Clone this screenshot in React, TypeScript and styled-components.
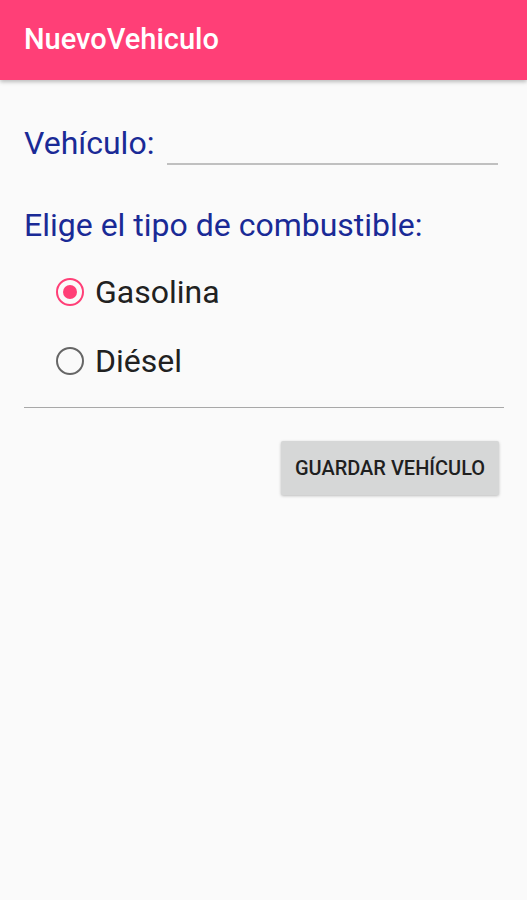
import React from "react";
import styled, { createGlobalStyle } from "styled-components";

const GlobalStyle = createGlobalStyle`
    html, body {
        margin: 0;
        padding: 0;
        background: #fafafa;
        font-family: Roboto, "Noto Sans", sans-serif;
    }
`;

const Screen = styled.div`
    width: 527px;
    height: 900px;
    background: #fafafa;
    display: flex;
    flex-direction: column;
`;

const AppBar = styled.header`
    height: 80px;
    background: #ff3f77;
    box-shadow: 0 2px 4px rgba(0, 0, 0, 0.25);
    display: flex;
    align-items: center;
    padding: 0 24px;
    flex-shrink: 0;
`;

const Title = styled.h1`
    margin: 0;
    color: #ffffff;
    font-size: 29px;
    font-weight: 500;
    padding-bottom: 2px;
`;

const Content = styled.main`
    padding: 45px 23px 0 24px;
    display: flex;
    flex-direction: column;
`;

const FieldRow = styled.div`
    display: flex;
    align-items: flex-end;
    gap: 13px;
`;

const Label = styled.span`
    color: #1a2a96;
    font-size: 32px;
    line-height: 36px;
`;

const TextInput = styled.input`
    flex: 1;
    min-width: 0;
    margin-right: 6px;
    margin-bottom: -4px;
    border: none;
    border-bottom: 2px solid #c0c0c0;
    background: transparent;
    height: 30px;
    outline: none;
    font-size: 26px;
`;

const Question = styled(Label)`
    margin-top: 46px;
`;

const RadioGroup = styled.div`
    display: flex;
    flex-direction: column;
    gap: 33px;
    padding: 31px 0 0 32px;
`;

const RadioRow = styled.label`
    display: flex;
    align-items: center;
    gap: 11px;
    font-size: 32px;
    color: #212121;
    line-height: 36px;
`;

const RadioCircle = styled.span<{ $checked?: boolean }>`
    width: 28px;
    height: 28px;
    box-sizing: border-box;
    border-radius: 50%;
    border: 2.5px solid ${(p) => (p.$checked ? "#ff3f77" : "#666666")};
    display: flex;
    align-items: center;
    justify-content: center;
    &::after {
        content: "";
        width: 14px;
        height: 14px;
        border-radius: 50%;
        background: ${(p) => (p.$checked ? "#ff3f77" : "transparent")};
    }
`;

const Divider = styled.hr`
    margin: 28px 0 0 0;
    border: none;
    border-top: 1.5px solid #a8a8a8;
`;

const ButtonRow = styled.div`
    display: flex;
    justify-content: flex-end;
    padding-top: 33px;
    padding-right: 5px;
`;

const Button = styled.button`
    width: 218px;
    height: 54px;
    padding: 0;
    border: none;
    border-radius: 2px;
    background: #d6d7d7;
    box-shadow: 0 1px 3px rgba(0, 0, 0, 0.25);
    color: #1f1f1f;
    font-family: Roboto, sans-serif;
    font-size: 20px;
    font-weight: 500;
`;

export default function App() {
    return (
        <>
            <GlobalStyle />
            <Screen>
                <AppBar>
                    <Title>NuevoVehiculo</Title>
                </AppBar>
                <Content>
                    <FieldRow>
                        <Label>Vehículo:</Label>
                        <TextInput />
                    </FieldRow>
                    <Question>Elige el tipo de combustible:</Question>
                    <RadioGroup>
                        <RadioRow>
                            <RadioCircle $checked />
                            Gasolina
                        </RadioRow>
                        <RadioRow>
                            <RadioCircle />
                            Diésel
                        </RadioRow>
                    </RadioGroup>
                    <Divider />
                    <ButtonRow>
                        <Button>GUARDAR VEHÍCULO</Button>
                    </ButtonRow>
                </Content>
            </Screen>
        </>
    );
}
